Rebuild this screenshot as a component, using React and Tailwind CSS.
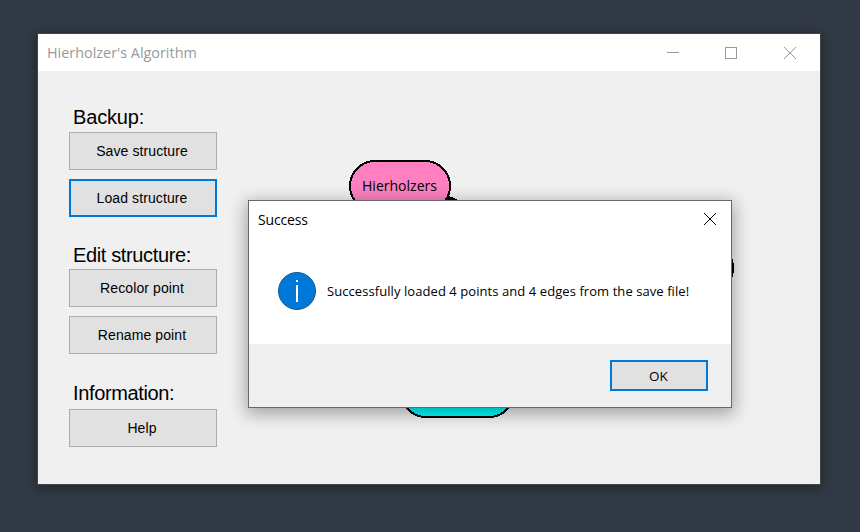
import React from "react";

const UI = "font-['Open_Sans','Noto_Sans',sans-serif]";

function SideButton({ children, focused }) {
  return (
    <button
      className={
        "flex h-[38px] w-[148px] shrink-0 items-center justify-center bg-[#e1e1e1] pr-[2px] text-[14px] leading-none tracking-[0.1px] text-black " +
        (focused ? "border-2 border-[#0078d7]" : "border border-[#adadad]")
      }
    >
      {children}
    </button>
  );
}

function Section({ title, titleClass, children }) {
  return (
    <section className="flex flex-col">
      <h2 className={"pl-1 text-[20px] leading-[24px] whitespace-nowrap " + titleClass}>{title}</h2>
      <div className="flex flex-col gap-[9px]">{children}</div>
    </section>
  );
}

function Cross({ className }) {
  return (
    <svg className={className} width="12" height="12" viewBox="0 0 12 12" fill="none" stroke="currentColor" strokeWidth="1">
      <path d="M0 0L12 12M12 0L0 12" />
    </svg>
  );
}

function Graph() {
  return (
    <svg className="absolute inset-0" width="782" height="413" viewBox="38 71 782 413" shapeRendering="crispEdges">
      <path d="M424 188L457 201.5" stroke="#000" strokeWidth="4" />
      <rect x="350" y="161" width="100" height="50" rx="25" fill="#ff80c0" stroke="#000" strokeWidth="2" />
      <rect x="640" y="243" width="93" height="50" rx="25" fill="#808000" stroke="#000" strokeWidth="2" />
      <rect x="401" y="367" width="113" height="50" rx="25" fill="#00ffff" stroke="#000" strokeWidth="2" />
      <text x="362" y="191" fontSize="15" textLength="75" lengthAdjust="spacingAndGlyphs" className={UI}>
        Hierholzers
      </text>
    </svg>
  );
}

function Dialog() {
  return (
    <div className={"absolute left-[248px] top-[200px] flex h-[208px] w-[484px] flex-col border border-[#686868] bg-white text-black shadow-[0_4px_16px_2px_rgba(0,0,0,0.33)] " + UI}>
      <div className="flex h-[36px] items-center justify-between pl-[9px] pr-[15px]">
        <span className="text-[14px] tracking-[-0.15px]">Success</span>
        <Cross className="text-black" />
      </div>
      <div className="flex h-[107px] items-center pl-[29px] pt-[1px]">
        <svg className="shrink-0" width="38" height="38" viewBox="0 0 38 38">
          <circle cx="19" cy="19" r="18.5" fill="#0078d7" stroke="#155a93" />
          <path d="M18 8h2v2h-2zM18 13h2v17h-2z" fill="#fff" />
        </svg>
        <span className="ml-[11px] pt-[2px] whitespace-nowrap text-[13px] tracking-[0.07px]">
          Successfully loaded 4 points and 4 edges from the save file!
        </span>
      </div>
      <div className="flex flex-1 items-start justify-end bg-[#efefef] pr-[23px] pt-[16px]">
        <button className="flex h-[31px] w-[98px] items-center justify-center border-2 border-[#0078d7] bg-[#e1e1e1] pr-[1px] pt-[1px] text-[13.5px]">
          OK
        </button>
      </div>
    </div>
  );
}

export default function App() {
  return (
    <div className="relative h-[532px] w-[860px] overflow-hidden bg-[#323a45] pl-[37px] pt-[33px]">
      <div className="flex h-[452px] w-[784px] flex-col border border-[#414447] bg-[#f0f0f0] shadow-[0_2px_12px_1px_rgba(0,0,0,0.35)]">
        <header className={"flex h-[37px] shrink-0 items-center justify-between bg-white pl-[9px] pr-[24px] text-[#999] " + UI}>
          <span className="text-[14.4px]">Hierholzer's Algorithm</span>
          <div className="flex items-center">
            <span className="h-px w-3 bg-[#999]" />
            <span className="ml-[46px] h-3 w-3 border border-[#999]" />
            <Cross className="ml-[47px] text-[#999]" />
          </div>
        </header>
        <main className="relative flex-1">
          <Graph />
          <aside className="relative flex w-[180px] flex-col gap-[26px] pl-[31px] pt-[34px] font-['Liberation_Sans',Arial,sans-serif] text-black">
            <Section title="Backup:" titleClass="h-[27px] tracking-[-0.15px]">
              <SideButton>Save structure</SideButton>
              <SideButton focused>Load structure</SideButton>
            </Section>
            <Section title="Edit structure:" titleClass="h-[26px] tracking-[-0.36px]">
              <SideButton>Recolor point</SideButton>
              <SideButton>Rename point</SideButton>
            </Section>
            <Section title="Information:" titleClass="h-[29px] pt-px tracking-[-0.36px]">
              <SideButton>Help</SideButton>
            </Section>
          </aside>
        </main>
      </div>
      <Dialog />
    </div>
  );
}
